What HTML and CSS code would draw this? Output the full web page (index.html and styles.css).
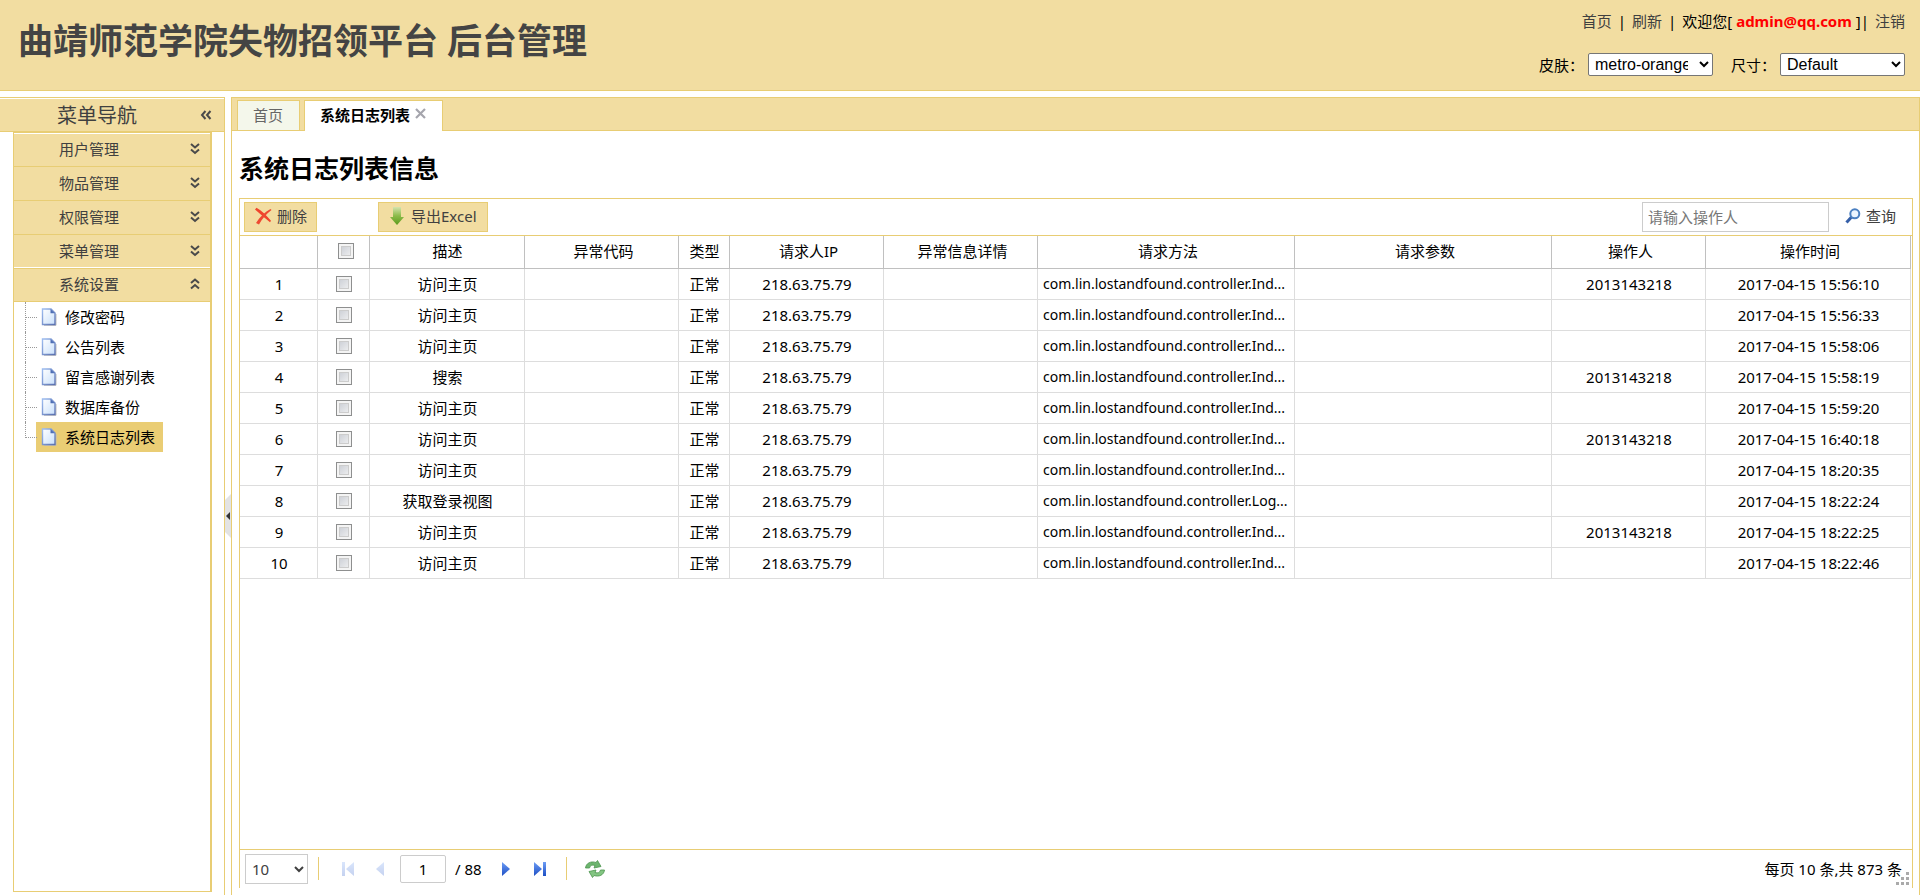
FILE: index.html
```html
<!DOCTYPE html>
<html lang="zh-CN">
<head>
<meta charset="utf-8">
<title>曲靖师范学院失物招领平台 后台管理</title>
<link rel="stylesheet" href="styles.css">
</head>
<body>
<svg class="defs" aria-hidden="true">
  <defs>
    <linearGradient id="paper" x1="0" y1="0" x2="1" y2="1"><stop offset="0" stop-color="#fff"/><stop offset="1" stop-color="#c9e0fb"/></linearGradient>
    <linearGradient id="edge" x1="0" y1="0" x2="1" y2="1"><stop offset="0" stop-color="#9dbdf0"/><stop offset="1" stop-color="#5a70b0"/></linearGradient>
    <linearGradient id="blue" x1="0" y1="0" x2="0" y2="1"><stop offset="0" stop-color="#6d9df5"/><stop offset="1" stop-color="#1d4fc4"/></linearGradient>
    <linearGradient id="green" x1="0" y1="0" x2="0" y2="1"><stop offset="0" stop-color="#d5e3ae"/><stop offset=".5" stop-color="#8aba48"/><stop offset="1" stop-color="#5c9a1c"/></linearGradient>
    <symbol id="page" viewBox="0 0 16 18"><path d="M3 17.300h12V6" fill="none" stroke="#bbb"/><path d="M1.500 1h8.500l4 4v11.500H1.500z" fill="url(#paper)" stroke="url(#edge)" stroke-width="1.400"/><path d="M9.500 1v4.300h4.300z" fill="#4f6fb5"/></symbol>
    <symbol id="down" viewBox="0 0 10 12"><path d="M1 1l4 3.500L9 1M1 6.500L5 10l4-3.500" fill="none" stroke="#4a4a4a" stroke-width="2"/></symbol>
    <symbol id="up" viewBox="0 0 10 12"><path d="M1 5l4-3.500L9 5M1 10.500L5 7l4 3.500" fill="none" stroke="#4a4a4a" stroke-width="2"/></symbol>
  </defs>
</svg>
<header class="top">
  <h1 class="brand">曲靖师范学院失物招领平台 后台管理</h1>
  <div class="tools">
    <nav class="links"><a href="#">首页</a><span>|</span><a href="#">刷新</a><span>|</span><span>欢迎您[ <strong>admin@qq.com</strong> ]|</span><a href="#">注销</a></nav>
    <div class="prefs">
      <label for="skin">皮肤：</label><select id="skin"><option>metro-orange</option></select>
      <label for="size" class="second">尺寸：</label><select id="size"><option>Default</option></select>
    </div>
  </div>
</header>
<div class="body">
  <aside class="west">
    <div class="west-head"><h2>菜单导航</h2>
      <button class="plain" aria-label="收起"><svg width="12" height="10" viewBox="0 0 12 10"><path d="M5.500 1L2 5l3.500 4M10.500 1L7 5l3.500 4" fill="none" stroke="#4a4a4a" stroke-width="2"/></svg></button>
    </div>
    <div class="accordion">
      <button class="acc">用户管理<svg width="10" height="12"><use href="#down"/></svg></button>
      <button class="acc">物品管理<svg width="10" height="12"><use href="#down"/></svg></button>
      <button class="acc">权限管理<svg width="10" height="12"><use href="#down"/></svg></button>
      <button class="acc above-open">菜单管理<svg width="10" height="12"><use href="#down"/></svg></button>
      <button class="acc open">系统设置<svg width="10" height="12"><use href="#up"/></svg></button>
      <ul class="tree">
        <li><a href="#"><svg width="16" height="18"><use href="#page"/></svg>修改密码</a></li>
        <li><a href="#"><svg width="16" height="18"><use href="#page"/></svg>公告列表</a></li>
        <li><a href="#"><svg width="16" height="18"><use href="#page"/></svg>留言感谢列表</a></li>
        <li><a href="#"><svg width="16" height="18"><use href="#page"/></svg>数据库备份</a></li>
        <li><a href="#" class="selected"><svg width="16" height="18"><use href="#page"/></svg>系统日志列表</a></li>
      </ul>
    </div>
  </aside>
  <div class="splitter"><svg width="6" height="44" viewBox="0 0 6 44"><path d="M6 0L0 6v32l6 6z" fill="#e3e3e3"/><path d="M5 18v8L1 22z" fill="#333"/></svg></div>
  <main class="center">
    <div class="tabs">
      <button class="tab">首页</button>
      <div class="tab active"><span>系统日志列表</span><button class="plain" aria-label="关闭"><svg width="11" height="11" viewBox="0 0 11 11"><path d="M1 1l9 9M10 1l-9 9" stroke="#a5a5ad" stroke-width="2.200"/></svg></button></div>
    </div>
    <div class="content">
      <h2 class="title">系统日志列表信息</h2>
      <section class="grid">
        <div class="toolbar">
          <button class="btn"><svg width="17" height="18" viewBox="0 0 17 18"><path d="M0 2.500L1.500.8C7 4 11 8 16 13.800l-1 1.400C10 11 5 7 0 2.500z" fill="#f0452c"/><path d="M15.500 2l1 1C11 7 7 12 4 17.500L1 16C5 9.500 10 5 15.500 2z" fill="#ee4a32"/></svg>删除</button>
          <button class="btn export"><svg width="14" height="18" viewBox="0 0 14 18"><path d="M3 0h8v10h3l-7 8-7-8h3z" fill="url(#green)"/></svg>导出Excel</button>
          <input class="search" type="text" placeholder="请输入操作人" aria-label="操作人">
          <button class="query"><svg width="16" height="16" viewBox="0 0 16 16"><path d="M6.500 9L1.500 14.500" stroke="#355fa8" stroke-width="3"/><circle cx="9.800" cy="5.800" r="4.500" fill="#eaf4ff" stroke="#4a7fc1" stroke-width="2"/></svg>查询</button>
        </div>
        <div class="rows">
          <table>
            <colgroup><col class="c-no"><col class="c-check"><col class="c-desc"><col class="c-mid"><col class="c-type"><col class="c-mid"><col class="c-mid"><col class="c-wide"><col class="c-wide"><col class="c-mid"><col class="c-time"></colgroup>
            <thead><tr><th></th><th><input type="checkbox" aria-label="全选"></th><th>描述</th><th>异常代码</th><th>类型</th><th>请求人IP</th><th>异常信息详情</th><th>请求方法</th><th>请求参数</th><th>操作人</th><th>操作时间</th></tr></thead>
            <tbody>
              <tr><td>1</td><td><input type="checkbox" aria-label="1"></td><td>访问主页</td><td></td><td>正常</td><td>218.63.75.79</td><td></td><td>com.lin.lostandfound.controller.Ind...</td><td></td><td>2013143218</td><td>2017-04-15 15:56:10</td></tr>
              <tr><td>2</td><td><input type="checkbox" aria-label="2"></td><td>访问主页</td><td></td><td>正常</td><td>218.63.75.79</td><td></td><td>com.lin.lostandfound.controller.Ind...</td><td></td><td></td><td>2017-04-15 15:56:33</td></tr>
              <tr><td>3</td><td><input type="checkbox" aria-label="3"></td><td>访问主页</td><td></td><td>正常</td><td>218.63.75.79</td><td></td><td>com.lin.lostandfound.controller.Ind...</td><td></td><td></td><td>2017-04-15 15:58:06</td></tr>
              <tr><td>4</td><td><input type="checkbox" aria-label="4"></td><td>搜索</td><td></td><td>正常</td><td>218.63.75.79</td><td></td><td>com.lin.lostandfound.controller.Ind...</td><td></td><td>2013143218</td><td>2017-04-15 15:58:19</td></tr>
              <tr><td>5</td><td><input type="checkbox" aria-label="5"></td><td>访问主页</td><td></td><td>正常</td><td>218.63.75.79</td><td></td><td>com.lin.lostandfound.controller.Ind...</td><td></td><td></td><td>2017-04-15 15:59:20</td></tr>
              <tr><td>6</td><td><input type="checkbox" aria-label="6"></td><td>访问主页</td><td></td><td>正常</td><td>218.63.75.79</td><td></td><td>com.lin.lostandfound.controller.Ind...</td><td></td><td>2013143218</td><td>2017-04-15 16:40:18</td></tr>
              <tr><td>7</td><td><input type="checkbox" aria-label="7"></td><td>访问主页</td><td></td><td>正常</td><td>218.63.75.79</td><td></td><td>com.lin.lostandfound.controller.Ind...</td><td></td><td></td><td>2017-04-15 18:20:35</td></tr>
              <tr><td>8</td><td><input type="checkbox" aria-label="8"></td><td>获取登录视图</td><td></td><td>正常</td><td>218.63.75.79</td><td></td><td>com.lin.lostandfound.controller.Log...</td><td></td><td></td><td>2017-04-15 18:22:24</td></tr>
              <tr><td>9</td><td><input type="checkbox" aria-label="9"></td><td>访问主页</td><td></td><td>正常</td><td>218.63.75.79</td><td></td><td>com.lin.lostandfound.controller.Ind...</td><td></td><td>2013143218</td><td>2017-04-15 18:22:25</td></tr>
              <tr><td>10</td><td><input type="checkbox" aria-label="10"></td><td>访问主页</td><td></td><td>正常</td><td>218.63.75.79</td><td></td><td>com.lin.lostandfound.controller.Ind...</td><td></td><td></td><td>2017-04-15 18:22:46</td></tr>
            </tbody>
          </table>
        </div>
        <footer class="pager">
          <select class="page-size" aria-label="每页条数"><option>10</option></select>
          <i class="sep"></i>
          <button class="plain first off" aria-label="首页"><svg width="14" height="16" viewBox="0 0 14 16"><path d="M1 1h3v14H1zM13 1v14L5 8z" fill="url(#blue)"/></svg></button>
          <button class="plain prev off" aria-label="上一页"><svg width="10" height="16" viewBox="0 0 10 16"><path d="M9 1v14L1 8z" fill="url(#blue)"/></svg></button>
          <input class="page-no" type="text" value="1" aria-label="页码">
          <span class="total">/ 88</span>
          <button class="plain next" aria-label="下一页"><svg width="10" height="16" viewBox="0 0 10 16"><path d="M1 1v14l8-7z" fill="url(#blue)"/></svg></button>
          <button class="plain last" aria-label="末页"><svg width="14" height="16" viewBox="0 0 14 16"><path d="M1 1v14l8-7zM10 1h3v14h-3z" fill="url(#blue)"/></svg></button>
          <i class="sep"></i>
          <button class="plain refresh" aria-label="刷新"><svg width="20" height="18" viewBox="0 0 20 18"><path d="M.5 8C1 3 6 .8 11 2.500L12.500.5 16 6.500 9 8l1-2.500C7 4.500 5 5.500 4.500 8z" fill="#6db56f" stroke="#4b944e" stroke-width=".8"/><path d="M19.500 10c-.5 5-5.500 7.200-10.500 5.500l-1.500 2L4 11.500l7-1.500-1 2.500c3 1 5 0 5.500-2.500z" fill="#83c582" stroke="#4b944e" stroke-width=".8"/></svg></button>
          <span class="info">每页 10 条,共 873 条</span>
          <svg class="grip" width="13" height="13" viewBox="0 0 13 13"><path d="M10 0h3v3h-3zM5 5h3v3H5zM10 5h3v3h-3zM0 10h3v3H0zM5 10h3v3H5zM10 10h3v3h-3z" fill="#aaa"/></svg>
        </footer>
      </section>
    </div>
  </main>
</div>
</body>
</html>
```

FILE: styles.css
```css
:root {
  --line: #e8cd74;
  --fill: #f2dda1;
  --ink: #404040;
}
* { box-sizing: border-box; }
body {
  margin: 0;
  height: 100vh;
  display: flex;
  flex-direction: column;
  background: #fff;
  color: #000;
  font: 15px/20px "Noto Sans", "Noto Sans CJK SC", sans-serif;
  overflow: hidden;
}
h1, h2 { margin: 0; }
button, input, select { font: inherit; color: inherit; }
button { cursor: pointer; }
a { color: var(--ink); text-decoration: none; }
svg { display: block; flex: none; }
.defs { position: absolute; width: 0; height: 0; }
.plain { padding: 0; border: 0; background: none; }

.top {
  display: flex;
  justify-content: space-between;
  min-height: 91px;
  padding: 10px 15px 0 18px;
  background: var(--fill);
  border-bottom: 1px solid var(--line);
}
.brand { font-size: 35px; line-height: 62px; color: #444; white-space: nowrap; }
.tools { display: flex; flex-direction: column; align-items: flex-end; gap: 21px; }
.links { display: flex; gap: 6px; line-height: 22px; }
.links strong { color: #f00; }
.prefs { display: flex; align-items: center; }
.prefs select {
  width: 125px;
  height: 23px;
  padding: 0 8px 0 2px;
  border: 1px solid #767676;
  border-radius: 2px;
  background: #fff;
  font: 16px "Liberation Sans", sans-serif;
}
.prefs label { margin-right: 4px; }
.prefs .second { margin-left: 18px; }

.body { flex: 1; display: flex; min-height: 0; padding-top: 6px; }
.west {
  width: 225px;
  display: flex;
  flex-direction: column;
  border: solid var(--line);
  border-width: 1px 1px 0 0;
}
.west-head {
  display: flex;
  align-items: center;
  justify-content: space-between;
  height: 34px;
  padding: 0 12px 0 57px;
  background: var(--fill);
  border-top: 1px solid #fff;
  border-bottom: 1px solid var(--line);
}
.west-head h2 { padding-top: 2px; font-size: 20px; font-weight: 400; color: var(--ink); }
.accordion {
  flex: 1;
  margin: 0 12px 3px 13px;
  border: solid var(--line);
  border-width: 1px 2px 1px 1px;
}
.acc {
  display: flex;
  align-items: center;
  justify-content: space-between;
  width: 100%;
  height: 34px;
  padding: 0 10px 2px 45px;
  background: var(--fill);
  border: 0;
  border-bottom: 1px solid var(--line);
  color: var(--ink);
}
.acc:first-child { border-top: 1px solid #fff; }
.acc.above-open { box-shadow: inset 0 -1px #fff; }
.acc.open { height: 33px; }
.tree { list-style: none; margin: 0; padding: 0 0 0 11px; }
.tree li { display: flex; height: 30px; position: relative; padding-left: 11px; }
.tree li::before {
  content: "";
  position: absolute;
  left: 0;
  top: 0;
  width: 11px;
  height: 15px;
  border: dotted #999;
  border-width: 0 0 1px 1px;
}
.tree li:not(:last-child)::after {
  content: "";
  position: absolute;
  left: 0;
  top: 15px;
  height: 15px;
  border-left: 1px dotted #999;
}
.tree a { display: flex; align-items: center; gap: 8px; padding: 0 8px 1px 5px; color: #000; }
.tree .selected { background: #eacd74; }
.splitter { width: 6px; display: flex; align-items: center; padding-bottom: 1px; padding-top: 41px; }

.center {
  flex: 1;
  min-width: 0;
  display: flex;
  flex-direction: column;
  border: 1px solid var(--line);
  border-bottom: 0;
}
.tabs {
  display: flex;
  align-items: flex-end;
  gap: 4px;
  height: 33px;
  padding-left: 5px;
  background: var(--fill);
  box-shadow: inset 0 -1px var(--line);
}
.tab {
  display: flex;
  align-items: center;
  height: 31px;
  padding: 0 16px 2px 15px;
  border: 1px solid var(--line);
  background: #f4f7eb;
  color: #666;
}
.tab.active {
  gap: 5px;
  background: #fff;
  border-bottom: 0;
  color: #000;
  font-weight: 700;
}
.tab.active svg { margin-bottom: 3px; }
.content { flex: 1; display: flex; flex-direction: column; min-height: 0; padding: 21px 6px 7px 7px; }
.title { font-size: 25px; line-height: 32px; margin-bottom: 14px; }
.grid {
  flex: 1;
  display: flex;
  flex-direction: column;
  border: 1px solid var(--line);
  border-bottom: 0;
}
.toolbar {
  display: flex;
  align-items: center;
  height: 37px;
  padding: 0 16px 0 4px;
  border-bottom: 1px solid var(--line);
}
.btn {
  display: flex;
  align-items: center;
  gap: 5px;
  height: 30px;
  padding: 0 9px 2px 10px;
  background: var(--fill);
  border: 1px solid var(--line);
  color: var(--ink);
}
.export { margin-left: 61px; gap: 7px; padding: 0 10px 2px 11px; }
.search {
  width: 187px;
  height: 30px;
  margin-left: auto;
  padding: 0 5px;
  border: 1px solid #ccc;
  outline: 0;
}
.search::placeholder { color: #777; }
.query {
  display: flex;
  align-items: center;
  gap: 5px;
  margin-left: 16px;
  padding: 0 0 2px;
  background: none;
  border: 0;
  color: var(--ink);
}
.rows { flex: 1; padding-right: 1px; }
table { width: 100%; table-layout: fixed; border-collapse: separate; border-spacing: 0; }
.c-no { width: 78px; }
.c-check { width: 52px; }
.c-desc { width: 155px; }
.c-mid { width: 154px; }
.c-type { width: 51px; }
.c-wide { width: 257px; }
.c-time { width: 205px; }
th, td {
  padding: 0 4px 0 5px;
  text-align: center;
  font-weight: 400;
  white-space: nowrap;
  overflow: hidden;
  border: solid #ddd;
  border-width: 0 1px 1px 0;
}
th { height: 33px; padding: 0 4px 2px 8px; border-color: #c0c0c0; }
th:nth-child(3), th:nth-child(5) { padding-left: 5px; }
td { height: 31px; }
td:nth-child(8) { text-align: left; font-size: 14px; }
table input {
  appearance: none;
  display: block;
  width: 16px;
  height: 16px;
  margin: 0 auto;
  border: 1px solid #8e8f8f;
  background: linear-gradient(135deg, #c4c8d0, #f6f6f6);
  box-shadow: inset 0 0 0 2px #f4f4f4, inset 0 0 0 3px #ccc;
}
.pager {
  display: flex;
  align-items: center;
  height: 39px;
  position: relative;
  padding: 0 10px 1px 5px;
  border-top: 1px solid var(--line);
}
.page-size {
  width: 63px;
  height: 30px;
  padding: 0 2px;
  border: 1px solid #ccc;
  background: #fff;
  color: var(--ink);
}
.sep { width: 1px; height: 23px; margin: 0 0 0 10px; background: var(--line); }
.first { margin-left: 22px; }
.off { opacity: .25; }
.prev { margin-left: 20px; }
.page-no {
  width: 46px;
  height: 28px;
  margin-left: 15px;
  padding: 0;
  text-align: center;
  border: 1px solid #ccc;
  border-radius: 2px;
}
.total { margin-left: 9px; }
.next { margin-left: 19px; }
.last { margin-left: 22px; }
.last + .sep { margin-left: 19px; }
.refresh { margin-left: 18px; }
.info { margin-left: auto; }
.grip { position: absolute; right: 3px; bottom: 3px; }
```
